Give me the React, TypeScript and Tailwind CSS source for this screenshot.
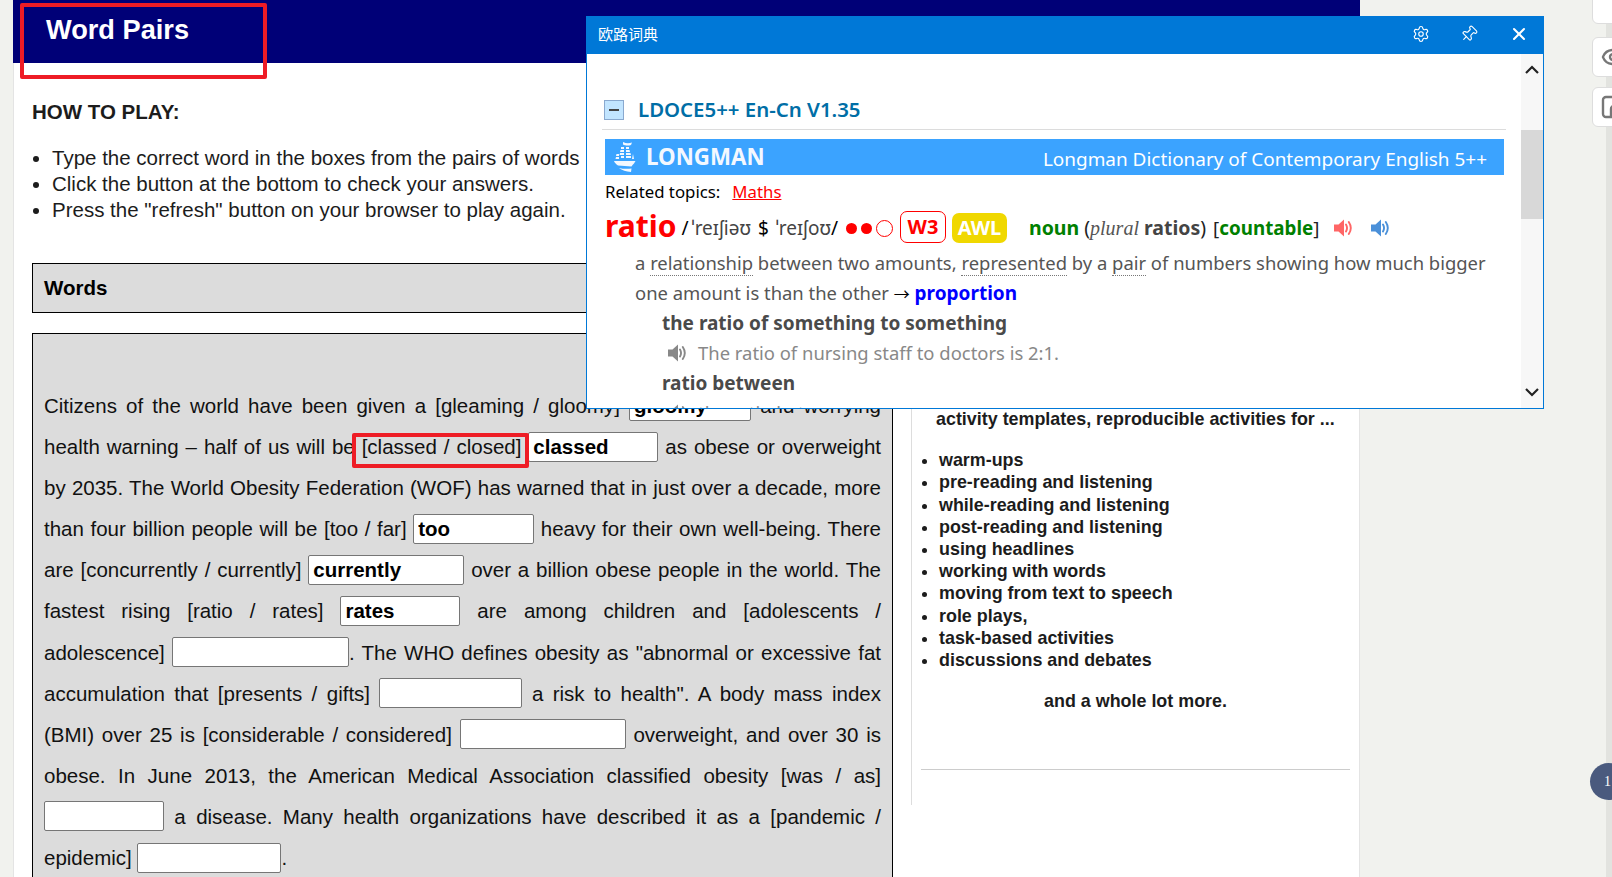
import { Eye, Pin, Settings, X } from "lucide-react";

const GAP_INPUT = "inline-block h-[30px] align-baseline rounded-[2px] border border-[#767676] bg-white px-1 font-bold text-black";

function Gap({ value = "", className }: { value?: string; className: string }) {
  return <input readOnly defaultValue={value} className={`${GAP_INPUT} ${className}`} />;
}

function Speaker({ color, className }: { color: string; className: string }) {
  return (
    <svg viewBox="0 0 18 18" className={className}>
      <path d="M0 5.5h4.5L10 .5v17l-5.5-5H0z" fill={color} />
      <path d="M12 5.5c1.3 2.2 1.3 4.8 0 7M14.8 3c2.4 3.6 2.4 8.4 0 12" fill="none" stroke={color} strokeWidth="1.9" strokeLinecap="round" />
    </svg>
  );
}

function ShipLogo() {
  return (
    <svg viewBox="0 0 22 32" className="h-[32px] w-[22px] shrink-0" fill="#f4f8ff">
      <path d="M9 1c3 1.5 6 1.5 9 .5l-1 2.5c-3 1-6 .5-8-.5z" />
      <path d="M7 6h3v2H7zM12 6h3v2h-3zM6.500 9H10v2H6zM12 9h3.500l.5 2h-4zM6 12h4v2H5.500zM12 12h4.500l.5 2h-5z" />
      <path d="M2.500 13H5v2H2zM2 16h3v2H1.500zM7 15h3v2H7zM12 15h5v2h-5zM19 13l1 5h-2z" />
      <path d="M0 20h21.500l-1.500 2.500c-2 2-2.500 3-2.500 3L4 24.500C2 23 .5 21.500 0 20z" />
      <path d="M5 27c4 1 9 1 12.500.5L17 31C12 30.500 8 29.500 5 27z" />
    </svg>
  );
}

function BookmarkIcon() {
  return (
    <svg viewBox="0 0 24 24" className="h-[24px] w-[24px] shrink-0" fill="none" stroke="#777" strokeWidth="2.4">
      <rect x="2" y="2" width="20" height="20" rx="3" />
      <path d="M10 21v-7a3 3 0 0 1 3-3h9" />
    </svg>
  );
}

function DictionaryPopup() {
  return (
    <div className="absolute left-[586px] top-[16px] z-10 flex h-[393px] w-[958px] flex-col border border-[#0078d7] bg-white font-['Noto_Sans','Noto_Sans_CJK_SC',sans-serif]">
      <div className="flex h-[37px] shrink-0 items-center bg-[#0078d7] pb-[3px] pl-[11px] pr-[14px] text-white">
        <span className="text-[15px]">欧路词典</span>
        <div className="ml-auto flex items-center gap-[30px]">
          <Settings size={18} strokeWidth={1.5} />
          <Pin size={18} strokeWidth={1.5} className="mr-px rotate-45" />
          <X size={20} strokeWidth={2.5} />
        </div>
      </div>

      <div className="flex min-h-0 flex-1">
        <div className="min-w-0 flex-1 overflow-hidden px-[15px]">
          <div className="flex h-[76px] items-center gap-[14px] border-b border-[#dcdcdc] pb-[2px] pl-[2px] pt-[38px]">
            <span className="flex h-[20px] w-[20px] items-center justify-center border border-[#8aa9cf] bg-[#c2e5ff]">
              <span className="h-[2px] w-[10px] bg-[#444]" />
            </span>
            <span className="text-[20.4px] font-semibold text-[#006ea6]">LDOCE5++ En-Cn V1.35</span>
          </div>

          <div className="ml-[3px] mr-[2px] mt-[9px] flex h-[36px] items-center bg-[#3ba3ff] pl-[9px] pr-[17px] text-white">
            <ShipLogo />
            <span className="ml-[10px] text-[22.3px] font-bold text-[#f4f8ff]">LONGMAN</span>
            <span className="ml-auto pt-[4px] text-[18.95px]">Longman Dictionary of Contemporary English 5++</span>
          </div>

          <div className="ml-[3px] mt-[4px] flex h-[25px] items-center text-[16.8px] text-black">
            Related topics:
            <span className="ml-[12px] text-[#f00] underline">Maths</span>
          </div>

          <div className="ml-[3px] mt-[5px] flex h-[38px] items-center whitespace-nowrap text-[#444]">
            <span className="mb-[6px] text-[30px] font-bold text-[#f00]">ratio</span>
            <span className="ml-[5px] mt-[1px] text-[19px]">
              <span className="mr-[3px] text-black">/</span>ˈreɪʃiəʊ <span className="mx-[2px] text-black">$</span> ˈreɪʃoʊ<span className="text-black">/</span>
            </span>
            <span className="ml-[8px] h-[11px] w-[11px] rounded-full bg-[#f00]" />
            <span className="ml-[4px] h-[11px] w-[11px] rounded-full bg-[#f00]" />
            <span className="ml-[4px] h-[17px] w-[17px] rounded-full border border-[#f00]" />
            <span className="mb-[2px] ml-[7px] flex h-[32px] w-[46px] items-center justify-center rounded-[7px] border border-[#f00] text-[20px] font-bold text-[#f00]">W3</span>
            <span className="ml-[6px] flex h-[30px] w-[55px] items-center justify-center rounded-[7px] bg-[#f0d800] text-[20px] font-bold text-white">AWL</span>
            <span className="ml-[22px] text-[19.5px] font-bold text-[#008000]">noun</span>
            <span className="ml-[5px] text-[19.5px] text-[#222]">(</span>
            <span className="font-['Liberation_Serif',serif] text-[20px] italic text-[#555]">plural</span>
            <span className="ml-[5px] text-[19.5px] font-bold text-[#444]">ratios</span>
            <span className="text-[19.5px] text-[#222]">)</span>
            <span className="ml-[7px] text-[18.8px] text-[#222]">
              [<span className="font-bold text-[#008000]">countable</span>]
            </span>
            <Speaker color="#ff6666" className="ml-[15px] h-[18px] w-[18px]" />
            <Speaker color="#4a90d9" className="ml-[19px] h-[18px] w-[18px]" />
          </div>

          <div className="ml-[33px] mt-px whitespace-nowrap text-[18.43px] leading-[30px] text-[#555]">
            <div>
              a <span className="border-b border-dotted border-[#777] leading-none">relationship</span> between two amounts, <span className="border-b border-dotted border-[#777] leading-none">represented</span> by a <span className="border-b border-dotted border-[#777] leading-none">pair</span> of numbers showing how much bigger
            </div>
            <div className="-mb-px">
              one amount is than the other <span className="text-[16px] text-black">→</span> <span className="text-[19px] font-bold text-[#0000ff]">proportion</span>
            </div>
            <div className="ml-[27px]">
              <div className="text-[19px] font-bold text-[#4a4a4a]">the ratio of something to something</div>
              <div className="flex items-center text-[#888]">
                <Speaker color="#888" className="ml-[6px] h-[18px] w-[18px]" />
                <span className="ml-[12px]">The ratio of nursing staff to doctors is 2:1.</span>
              </div>
              <div className="text-[19px] font-bold text-[#4a4a4a]">ratio between</div>
              <div className="flex items-center text-[#888]">
                <Speaker color="#888" className="ml-[6px] h-[18px] w-[18px]" />
                <span className="ml-[12px]">the ratio between</span>
              </div>
            </div>
          </div>
        </div>

        <div className="relative w-[22px] shrink-0 bg-[#f7f7f7]">
          <svg viewBox="0 0 16 10" className="absolute left-[3px] top-[11px] h-[10px] w-[16px]" fill="none" stroke="#222" strokeWidth="2.2">
            <path d="M2 8l6-6 6 6" />
          </svg>
          <div className="absolute left-0 top-[76px] h-[89px] w-full bg-[#d8d8d8]" />
          <svg viewBox="0 0 16 10" className="absolute bottom-[11px] left-[3px] h-[10px] w-[16px]" fill="none" stroke="#222" strokeWidth="2.2">
            <path d="M2 2l6 6 6-6" />
          </svg>
        </div>
      </div>
    </div>
  );
}

export default function App() {
  return (
    <div className="relative h-[877px] w-full overflow-hidden bg-[#f1f2ee] font-['Liberation_Sans',Arial,sans-serif] text-[20.5px] text-[#1c1c1c]">
      <div className="ml-[13px] h-full w-[1347px] border-x border-[#e4e4e4] bg-white">
        <div className="-mx-px h-[63px] bg-[#000077] pl-[33px] pt-[12px] text-[27.2px] font-bold leading-[36px] text-white">Word Pairs</div>

        <div className="flex">
          <div className="w-[879px] shrink-0 pl-[18px]">
            <div className="mt-[36px] font-bold leading-[26px]">HOW TO PLAY:</div>
            <ul className="mt-[20px] list-disc pl-[20px] leading-[26px]">
              <li>Type the correct word in the boxes from the pairs of words</li>
              <li>Click the button at the bottom to check your answers.</li>
              <li>Press the "refresh" button on your browser to play again.</li>
            </ul>
            <div className="mt-[40px] h-[50px] border border-black bg-[#dcdcdc] pl-[11px] font-bold leading-[48px] text-black">Words</div>
            <div className="mt-[20px] border border-black bg-[#dcdcdc] px-[11px] pb-[200px] pt-[51px] text-justify leading-[41.1px] text-[#111]">
              Citizens of the world have been given a [gleaming / gloomy] <Gap value="gloomy" className="w-[122px]" /> and worrying health warning – half of us will be [classed / closed] <Gap value="classed" className="w-[130px]" /> as obese or overweight by 2035. The World Obesity Federation (WOF) has warned that in just over a decade, more than four billion people will be [too / far] <Gap value="too" className="w-[121px]" /> heavy for their own well-being. There are [concurrently / currently] <Gap value="currently" className="w-[156px]" /> over a billion obese people in the world. The fastest rising [ratio / rates] <Gap value="rates" className="w-[120px]" /> are among children and [adolescents / adolescence] <Gap className="w-[177px]" />. The WHO defines obesity as "abnormal or excessive fat accumulation that [presents / gifts] <Gap className="w-[143px]" /> a risk to health". A body mass index (BMI) over 25 is [considerable / considered] <Gap className="w-[166px]" /> overweight, and over 30 is obese. In June 2013, the American Medical Association classified obesity [was / as] <Gap className="w-[120px]" /> a disease. Many health organizations have described it as a [pandemic / epidemic] <Gap className="w-[144px]" />.
            </div>
          </div>

          <div className="ml-[18px] h-[742px] w-[439px] border-l border-[#dddddd] pl-[9px] text-[17.9px] font-bold leading-[22.2px]">
            <div className="pl-[15px] pt-[345px]">activity templates, reproducible activities for ...</div>
            <ul className="mt-[19px] list-disc pl-[18px]">
              <li>warm-ups</li>
              <li>pre-reading and listening</li>
              <li>while-reading and listening</li>
              <li>post-reading and listening</li>
              <li>using headlines</li>
              <li>working with words</li>
              <li>moving from text to speech</li>
              <li>role plays,</li>
              <li>task-based activities</li>
              <li>discussions and debates</li>
            </ul>
            <div className="mt-[19px] text-center">and a whole lot more.</div>
            <div className="mt-[57px] w-[429px] border-t border-[#cccccc]" />
          </div>
        </div>
      </div>

      <DictionaryPopup />

      <div className="pointer-events-none absolute left-[20px] top-[3px] h-[76px] w-[247px] rounded-[2px] border-[4px] border-[#ee1c25]" />
      <div className="pointer-events-none absolute left-[352px] top-[433px] h-[35px] w-[177px] rounded-[2px] border-[4px] border-[#ee1c25]" />

      <div className="absolute right-0 top-0 h-full w-[6px] bg-[#e2e3df]" />
      <div className="absolute left-[1592px] top-[-10px] h-[34px] w-[30px] rounded-[6px] border border-[#dddddd] bg-white" />
      <div className="absolute left-[1592px] top-[37px] flex h-[40px] w-[30px] items-center rounded-[6px] border border-[#dddddd] bg-white pl-[8px]">
        <Eye size={24} color="#777" strokeWidth={2.4} className="shrink-0" />
      </div>
      <div className="absolute left-[1592px] top-[87px] flex h-[40px] w-[30px] items-center rounded-[6px] border border-[#dddddd] bg-white pl-[8px]">
        <BookmarkIcon />
      </div>
      <div className="absolute left-[1590px] top-[763px] flex h-[37px] w-[37px] items-center rounded-full bg-[#4a5a7e] pl-[14px] font-['Liberation_Serif',serif] text-[14px] text-white">
        1
      </div>
    </div>
  );
}
